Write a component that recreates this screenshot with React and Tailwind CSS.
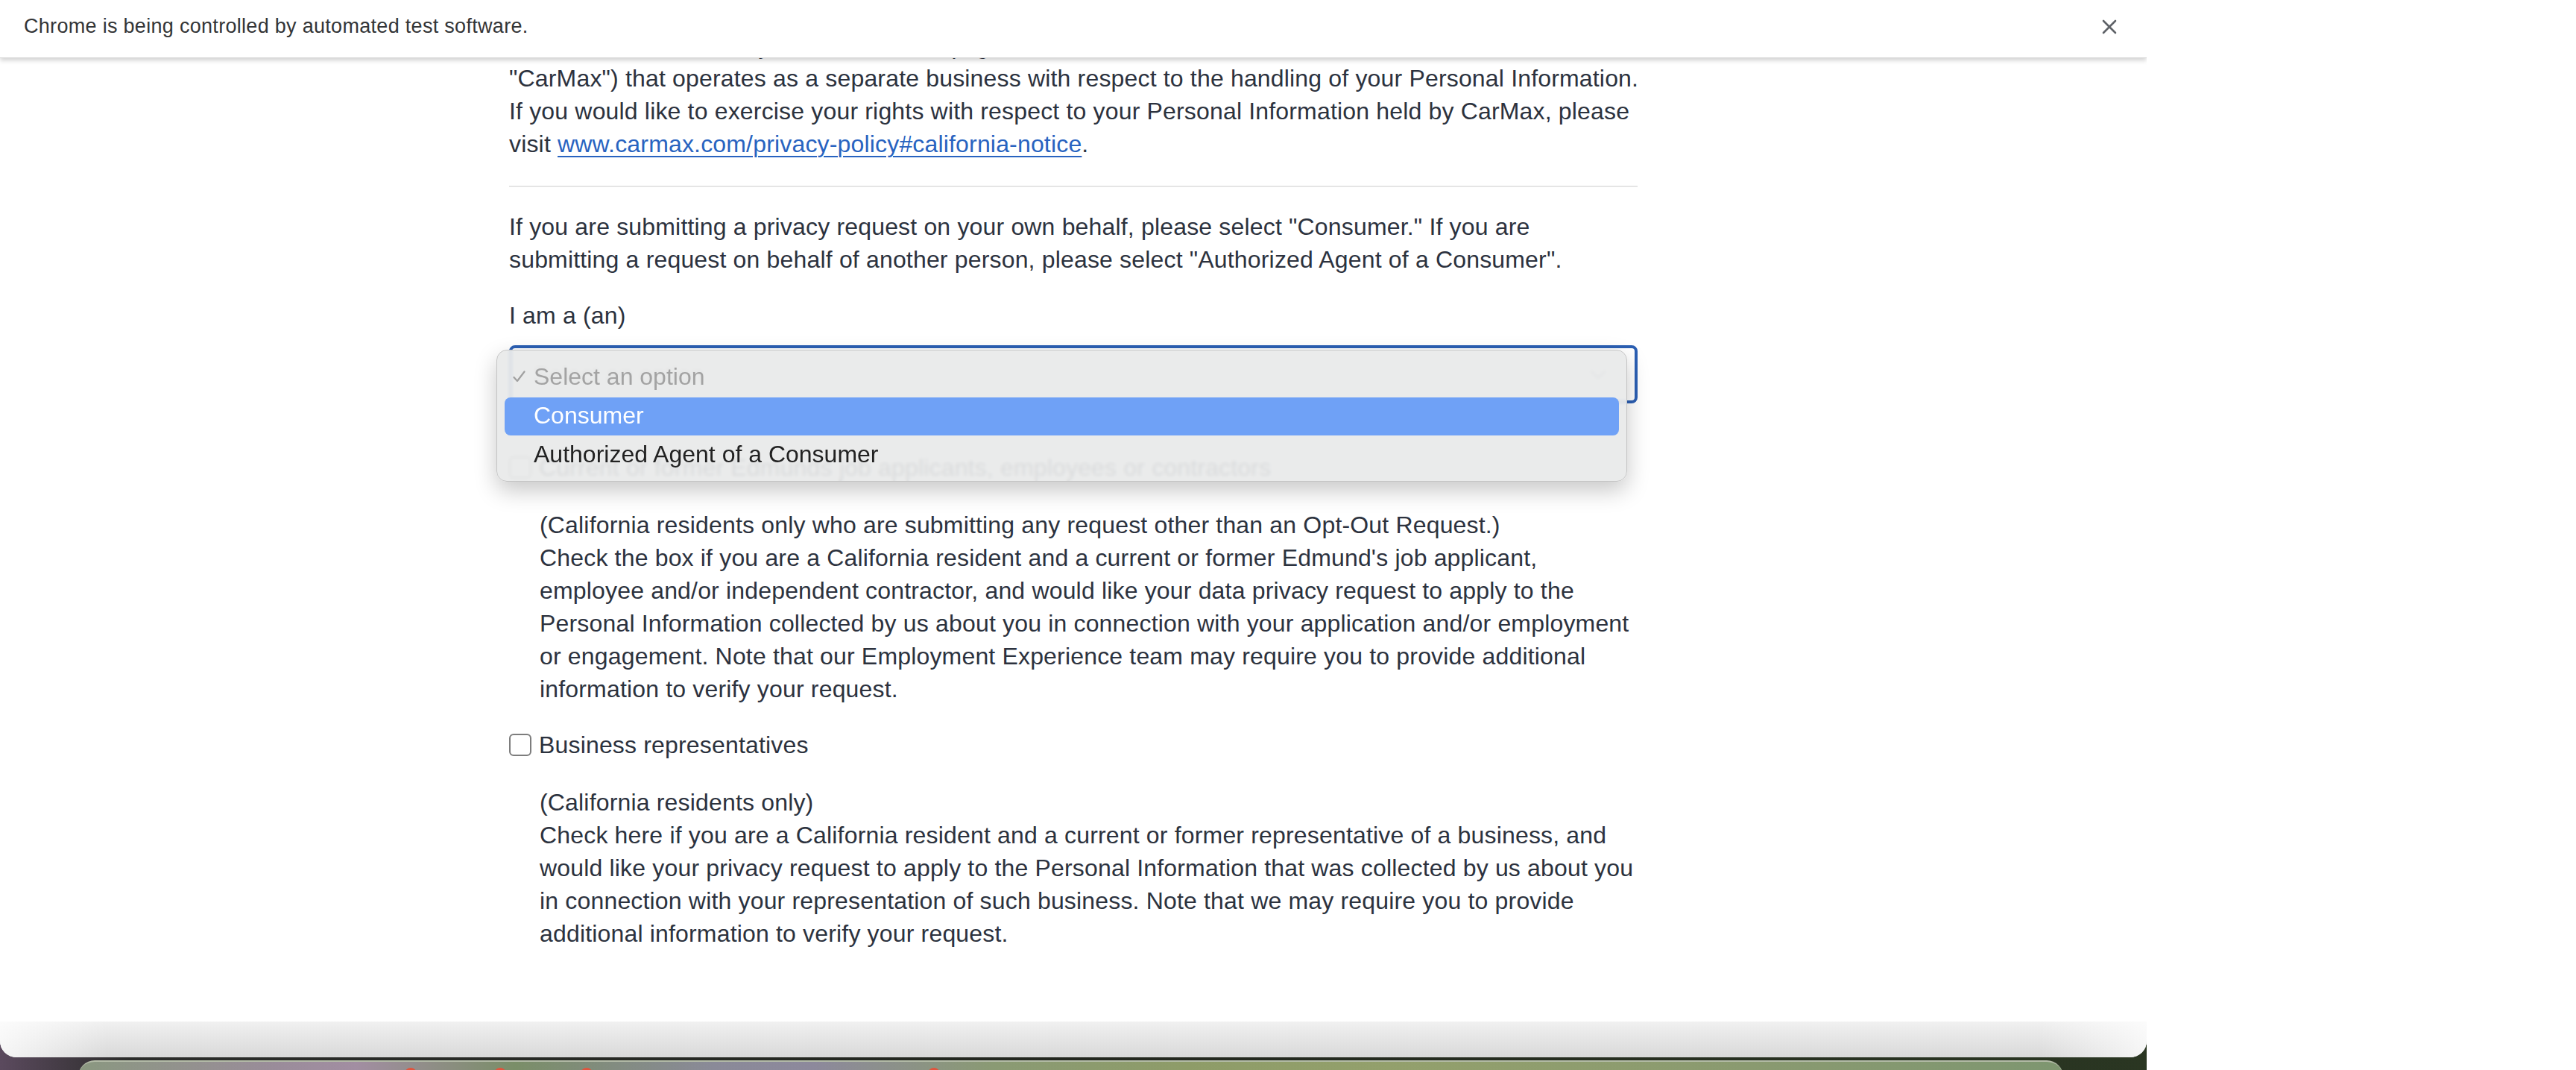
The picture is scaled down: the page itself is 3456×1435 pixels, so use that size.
import React from 'react';

function Checkbox() {
  return <span className="w-[30px] h-[30px] shrink-0 rounded-[6px] border-2 border-[#7d7d7d] bg-white" />;
}

function Line({ children }) {
  return <span className="block whitespace-nowrap">{children}</span>;
}

export default function App() {
  return (
    <div className="w-[3456px] h-[1435px] overflow-hidden bg-white font-['Liberation_Sans',Arial,sans-serif]">
      <div className="w-[2880px] h-[1435px] bg-[linear-gradient(to_right,#5b4a5e,#2b2c2a_6%,#22261e_50%,#2a3622)]">
        {/* browser window */}
        <div className="relative w-[2880px] h-[1418px] bg-white rounded-b-[22px] overflow-hidden">
          {/* automation infobar */}
          <div className="absolute top-0 left-0 right-0 z-20 h-[78px] bg-white flex items-center justify-between pl-[32px] pr-[40px] pb-[6px] shadow-[0_3px_6px_rgba(0,0,0,0.18)] border-b border-[#d6d6d6]">
            <span className="text-[27px] tracking-[0.3px] text-[#333537]">Chrome is being controlled by automated test software.</span>
            <svg width="20" height="20" viewBox="0 0 20 20" className="text-[#5f6368]">
              <path d="M2 2 L18 18 M18 2 L2 18" stroke="currentColor" strokeWidth="2.6" strokeLinecap="round" />
            </svg>
          </div>

          {/* page content */}
          <div className="w-[1514px] mx-auto pt-[39px] text-[32px] leading-[44px] tracking-[0.17px] text-[#2c323e]">
            <p>
              <Line>Edmunds is a subsidiary of CarMax, Inc. (together with its subsidiaries other than Edmunds,</Line>
              <Line>"CarMax") that operates as a separate business with respect to the handling of your Personal Information.</Line>
              <Line>If you would like to exercise your rights with respect to your Personal Information held by CarMax, please</Line>
              <Line>
                visit <a className="text-[#2863c0] underline decoration-2 underline-offset-[5px]">www.carmax.com/privacy-policy#california-notice</a>.
              </Line>
            </p>

            <div className="mt-[34px] h-[2px] bg-[#e5e5e5]" />

            <p className="mt-[31px]">
              <Line>If you are submitting a privacy request on your own behalf, please select "Consumer." If you are</Line>
              <Line>submitting a request on behalf of another person, please select "Authorized Agent of a Consumer".</Line>
            </p>

            <div className="mt-[31px]">I am a (an)</div>

            <div className="relative mt-[18px]">
              <div className="h-[78px] border-[4px] border-[#2b5fb3] rounded-[8px] bg-white flex items-center justify-between pl-[28px] pr-[38px] tracking-normal">
                <span className="text-[#a3a3a3] leading-[36px]">Select an option</span>
                <svg width="22" height="12" viewBox="0 0 22 12">
                  <path d="M1 1 L11 11 L21 1" fill="none" stroke="#8d94a3" strokeWidth="2" />
                </svg>
              </div>

              {/* native select popup */}
              <div className="absolute z-10 left-[-17px] top-[6px] w-[1517px] h-[177px] rounded-[14px] border border-[#c4c4c4] bg-[rgba(232,233,233,0.92)] backdrop-blur-[2px] shadow-[0_12px_30px_rgba(0,0,0,0.22)] pt-[8px] leading-[36px] tracking-normal">
                <div className="mx-[10px] h-[53px] flex items-center">
                  <span className="w-[39px] pl-[11px] shrink-0">
                    <svg width="17" height="16" viewBox="0 0 17 16">
                      <path d="M1.5 9 L6 14 L15.5 1.5" fill="none" stroke="#a0a0a0" strokeWidth="2.2" strokeLinecap="round" strokeLinejoin="round" />
                    </svg>
                  </span>
                  <span className="text-[#a3a3a3]">Select an option</span>
                </div>
                <div className="mx-[10px] mt-[2px] h-[51px] rounded-[8px] bg-[#6fa1f6] flex items-center pl-[39px] pb-[3px] text-white">
                  Consumer
                </div>
                <div className="mx-[10px] h-[53px] flex items-center pl-[39px] pb-[3px] text-[#222222]">
                  Authorized Agent of a Consumer
                </div>
              </div>
            </div>

            <label className="mt-[64px] flex items-center gap-[10px]">
              <Checkbox />
              <span>Current or former Edmunds job applicants, employees or contractors</span>
            </label>

            <p className="mt-[33px] pl-[41px]">
              <Line>(California residents only who are submitting any request other than an Opt-Out Request.)</Line>
              <Line>Check the box if you are a California resident and a current or former Edmund's job applicant,</Line>
              <Line>employee and/or independent contractor, and would like your data privacy request to apply to the</Line>
              <Line>Personal Information collected by us about you in connection with your application and/or employment</Line>
              <Line>or engagement. Note that our Employment Experience team may require you to provide additional</Line>
              <Line>information to verify your request.</Line>
            </p>

            <label className="mt-[31px] flex items-center gap-[10px]">
              <Checkbox />
              <span>Business representatives</span>
            </label>

            <p className="mt-[33px] pl-[41px]">
              <Line>(California residents only)</Line>
              <Line>Check here if you are a California resident and a current or former representative of a business, and</Line>
              <Line>would like your privacy request to apply to the Personal Information that was collected by us about you</Line>
              <Line>in connection with your representation of such business. Note that we may require you to provide</Line>
              <Line>additional information to verify your request.</Line>
            </p>
          </div>

          {/* bottom shadow band of the window */}
          <div className="absolute left-0 right-0 bottom-0 h-[48px] bg-[linear-gradient(#f1f1f1,#d9d9d9)]">
            <div className="absolute inset-0 bg-[linear-gradient(to_right,rgba(255,255,255,0.75),rgba(255,255,255,0)_5%,rgba(255,255,255,0)_95%,rgba(255,255,255,0.75))]" />
          </div>
        </div>

        {/* desktop / dock strip */}
        <div className="relative ml-[105px] mt-[4px] w-[2663px] h-[30px] rounded-t-[22px] border-t-2 border-[#b4bca8] bg-[linear-gradient(to_right,#8a9880,#9a8c9a_10%,#a28ea2_14%,#7a8e68_22%,#8a8a98_32%,#8d899c_37%,#8a9a74_46%,#8e9c68_56%,#93a06c_66%,#8a9a70_84%,#7e9670)]">
          <span className="absolute left-[438px] top-[8px] w-[16px] h-[16px] rounded-full bg-[#e0553e]" />
          <span className="absolute left-[558px] top-[8px] w-[16px] h-[16px] rounded-full bg-[#e0553e]" />
          <span className="absolute left-[674px] top-[8px] w-[16px] h-[16px] rounded-full bg-[#e0553e]" />
          <span className="absolute left-[1140px] top-[8px] w-[16px] h-[16px] rounded-full bg-[#e0553e]" />
        </div>
      </div>
    </div>
  );
}
